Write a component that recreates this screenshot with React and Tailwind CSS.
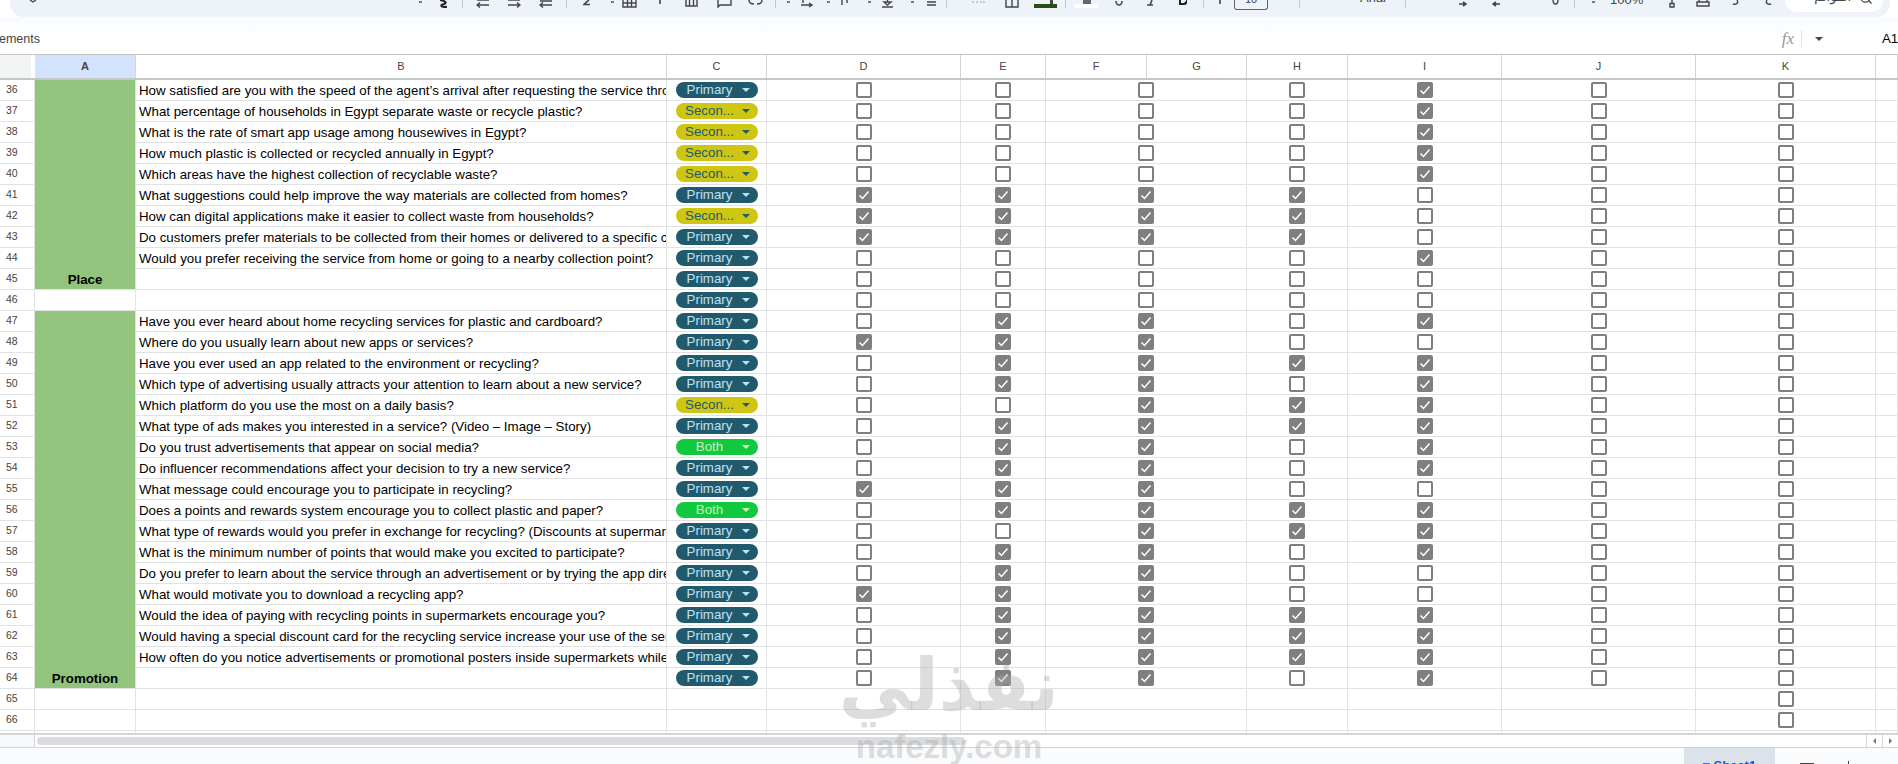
import React from 'react'
import { Search } from 'lucide-react'

const font = "font-['Liberation_Sans',Arial,sans-serif]"
const gridCols = 'grid grid-cols-[35px_101px_531px_100px_194px_85px_201px_101px_154px_194px_180px_22px]'
const line = 'border-r border-b border-[#e1e3e3]'

const rows = [
  [36, 'How satisfied are you with the speed of the agent’s arrival after requesting the service through', 'P', 'I'],
  [37, 'What percentage of households in Egypt separate waste or recycle plastic?', 'S', 'I'],
  [38, 'What is the rate of smart app usage among housewives in Egypt?', 'S', 'I'],
  [39, 'How much plastic is collected or recycled annually in Egypt?', 'S', 'I'],
  [40, 'Which areas have the highest collection of recyclable waste?', 'S', 'I'],
  [41, 'What suggestions could help improve the way materials are collected from homes?', 'P', 'DEFH'],
  [42, 'How can digital applications make it easier to collect waste from households?', 'S', 'DEFH'],
  [43, 'Do customers prefer materials to be collected from their homes or delivered to a specific collection', 'P', 'DEFH'],
  [44, 'Would you prefer receiving the service from home or going to a nearby collection point?', 'P', 'I'],
  [45, '', 'P', ''],
  [46, '', 'P', ''],
  [47, 'Have you ever heard about home recycling services for plastic and cardboard?', 'P', 'EFI'],
  [48, 'Where do you usually learn about new apps or services?', 'P', 'DEF'],
  [49, 'Have you ever used an app related to the environment or recycling?', 'P', 'EFHI'],
  [50, 'Which type of advertising usually attracts your attention to learn about a new service?', 'P', 'EFI'],
  [51, 'Which platform do you use the most on a daily basis?', 'S', 'FHI'],
  [52, 'What type of ads makes you interested in a service? (Video – Image – Story)', 'P', 'EFHI'],
  [53, 'Do you trust advertisements that appear on social media?', 'B', 'EFI'],
  [54, 'Do influencer recommendations affect your decision to try a new service?', 'P', 'EFI'],
  [55, 'What message could encourage you to participate in recycling?', 'P', 'DEF'],
  [56, 'Does a points and rewards system encourage you to collect plastic and paper?', 'B', 'EFHI'],
  [57, 'What type of rewards would you prefer in exchange for recycling? (Discounts at supermarkets', 'P', 'FHI'],
  [58, 'What is the minimum number of points that would make you excited to participate?', 'P', 'EFI'],
  [59, 'Do you prefer to learn about the service through an advertisement or by trying the app directly', 'P', 'EF'],
  [60, 'What would motivate you to download a recycling app?', 'P', 'DEF'],
  [61, 'Would the idea of paying with recycling points in supermarkets encourage you?', 'P', 'EFHI'],
  [62, 'Would having a special discount card for the recycling service increase your use of the service', 'P', 'EFHI'],
  [63, 'How often do you notice advertisements or promotional posters inside supermarkets while shopping', 'P', 'EFHI'],
  [64, '', 'P', 'EFI'],
  [65, '', '', ''],
  [66, '', '', ''],
]

const pills = {
  P: { label: 'Primary', box: 'bg-[#215a6c] text-[#bfe1f6]', caret: 'border-t-[#bfe1f6]' },
  S: { label: 'Secon...', box: 'bg-[#cfc613] text-[#215a6c]', caret: 'border-t-[#215a6c]' },
  B: { label: 'Both', box: 'bg-[#11c93f] text-[#d4edbc]', caret: 'border-t-[#d4edbc]' },
}

const Pill = ({ kind }) => {
  const p = pills[kind]
  return (
    <div className={`w-[82px] h-4 rounded-full flex items-center pl-[8px] pr-[8px] text-[13.3px] leading-4 ${p.box}`}>
      <span className="w-[52px] text-center whitespace-nowrap">{p.label}</span>
      <span className={`ml-auto w-0 h-0 border-x-[4px] border-x-transparent border-t-[4px] ${p.caret}`}></span>
    </div>
  )
}

const Check = ({ on }) => (
  <div className={`w-4 h-4 rounded-[2px] border-2 border-[#7f7f7f] flex items-center justify-center ${on ? 'bg-[#7f7f7f]' : 'bg-white'}`}>
    {on && (
      <svg width="12" height="12" viewBox="0 0 12 12" fill="none" stroke="#fff" strokeWidth="1.5">
        <path d="M1.5 6.5 4.5 9.5 10.5 2.5" />
      </svg>
    )}
  </div>
)

const BoxCell = ({ col, row, show = true }) => (
  <div className={`${line} flex items-center justify-center`}>
    {show && <Check on={row[3].includes(col)} />}
  </div>
)

const Ico = ({ w, d, className = '', color = '#444746', sw = 1.4 }) => (
  <svg width={w} height="8" viewBox={`0 0 ${w} 8`} fill="none" stroke={color} strokeWidth={sw} className={`shrink-0 ${className}`}>
    <path d={d} />
  </svg>
)

const Sep = ({ className }) => <div className={`w-px h-2 shrink-0 bg-[#c7c7c7] ${className}`}></div>
const Dot = ({ className }) => <div className={`w-[3px] h-[2px] mt-[1px] shrink-0 bg-[#777] ${className}`}></div>

const Toolbar = () => (
  <div className="ml-[10px] mr-[8px] h-[17px] bg-[#eef2f9] rounded-bl-[14px] rounded-br-[14px] flex items-start overflow-hidden">
    <Ico w={10} d="M2 0 5 2 8 0" className="ml-[18px]" />
    <Dot className="ml-[381px]" />
    <Ico w={13} d="M3 0C9 1 10 3 7 4 3 5 3 7 10 7" className="ml-[15px]" color="#222" sw={2} />
    <Sep className="ml-[12px]" />
    <Ico w={14} d="M1 0H13M1 5H13M4 2.5 1 5 4 7.5" className="ml-[13px]" />
    <Ico w={14} d="M1 0H13M1 5H13M10 2.5 13 5 10 7.5" className="ml-[17px]" />
    <Ico w={14} d="M1 1H13M1 5H13M4 2.5 1 5 4 7.5" className="ml-[18px]" />
    <Sep className="ml-[13px]" />
    <Ico w={8} d="M6 0 1 4.5H7" className="ml-[16px]" sw={1.6} />
    <Dot className="ml-[20px]" />
    <Ico w={15} d="M1 0V7H14V0M1 3H14M5.5 0V7M9.5 0V7" className="ml-[8px]" />
    <Ico w={4} d="M2 0V4" className="ml-[21px]" sw={1.6} />
    <Ico w={13} d="M1 0V6H12V0M4.5 0V6M8.5 0V6" className="ml-[23px]" />
    <Ico w={15} d="M1 0V7L3 5H14V0" className="ml-[19px]" />
    <Ico w={15} d="M1 0C1 3 3 4 6 4M14 0C14 3 12 4 9 4" className="ml-[16px]" />
    <Sep className="ml-[12px]" />
    <Dot className="ml-[11px]" />
    <Ico w={13} d="M3 0V3M1 5H12M9 3 12 5 9 7" className="ml-[10px]" />
    <Dot className="ml-[14px]" />
    <Ico w={10} d="M2 0V5M7 0V3" className="ml-[10px]" />
    <Dot className="ml-[18px]" />
    <Ico w={11} d="M5.5 0V2M2 2H9L5.5 5ZM0 7H11" className="ml-[11px]" />
    <Dot className="ml-[18px]" />
    <Ico w={9} d="M0 2H9M0 5H9" className="ml-[13px]" />
    <Sep className="ml-[10px]" />
    <Ico w={13} d="M1 1V3M5 1V3M9 1V3M12 1V3" className="ml-[25px]" color="#b5b8bd" />
    <Ico w={14} d="M1 0V7H13V0M7 0V7" className="ml-[20px]" />
    <div className="w-[23px] h-2 ml-[15px] shrink-0 flex flex-col items-end">
      <div className="w-[3px] h-[4px] bg-[#444746] mr-[4px]"></div>
      <div className="w-full h-[4px] bg-[#274e13]"></div>
    </div>
    <Sep className="ml-[8px]" />
    <div className="w-[23px] h-2 ml-[9px] shrink-0 flex flex-col items-center">
      <div className="w-[8px] h-[4px] bg-[#666]"></div>
      <div className="w-full h-[4px] bg-white"></div>
    </div>
    <Ico w={8} d="M1 1C1 4 3 5 4 5S7 4 7 1" className="ml-[17px]" sw={1.6} />
    <Ico w={6} d="M5 0 3 5H0M3 5H6" className="ml-[24px]" sw={1.6} />
    <Ico w={8} d="M1 0V4H5C8 4 8 0 7 0" className="ml-[26px]" color="#222" sw={2} />
    <Sep className="ml-[16px]" />
    <Ico w={2} d="M1 0V4" className="ml-[15px]" sw={1.6} />
    <div className={`w-[34px] h-[10px] ml-[13px] shrink-0 border border-t-0 border-[#5f6368] rounded-b-[3px] text-[11px] leading-none text-center text-[#444] overflow-hidden ${font}`}>
      <div className="-mt-[6px]">10</div>
    </div>
    <Sep className="ml-[31px]" />
    <div className={`w-[30px] ml-[60px] shrink-0 -mt-[10px] text-[13px] leading-4 text-[#444] ${font}`}>Arial</div>
    <Sep className="ml-[15px]" />
    <div className={`w-[17px] ml-[12px] shrink-0 -mt-[9px] text-[10px] leading-3 text-[#444] ${font}`}>123</div>
    <Ico w={8} d="M0 4H6M4 2 7 4 4 6" className="ml-[24px]" sw={1.6} />
    <Ico w={8} d="M8 4H2M4 2 1 4 4 6" className="ml-[25px]" sw={1.6} />
    <div className={`w-[10px] ml-[18px] shrink-0 -mt-[9px] text-[10px] leading-3 text-[#444] ${font}`}>%</div>
    <Ico w={7} d="M1 0C1 3 2 4 3.5 4S6 3 6 0" className="ml-[24px]" />
    <Sep className="ml-[15px]" />
    <Dot className="ml-[17px]" />
    <div className={`w-[35px] ml-[15px] shrink-0 -mt-[8px] text-[13px] leading-4 whitespace-nowrap text-[#444] ${font}`}>100%</div>
    <svg width="6" height="8" viewBox="0 0 6 8" fill="none" stroke="#444746" strokeWidth="1.4" className="ml-[24px] shrink-0"><path d="M3 0V3M1 3.5H5V7H1Z" /></svg>
    <Ico w={14} d="M3 0V2M11 0V2M1 2H13V6H1ZM3 6H11" className="ml-[21px]" />
    <Ico w={8} d="M6 0C8 3 5 5 2 4" className="ml-[21px]" />
    <Ico w={8} d="M2 0C0 3 3 5 6 4" className="ml-[26px]" />
    <div className="w-[98px] h-3 ml-[12px] shrink-0 bg-white rounded-b-[12px] flex items-start overflow-hidden">
      <div dir="rtl" className="ml-[24px] -mt-[11px] w-[42px] text-[13px] leading-4 text-[#444] whitespace-nowrap font-['DejaVu_Sans',sans-serif]">القوائم</div>
      <Search size={14} className="ml-[8px] -mt-[9px] text-[#444]" />
    </div>
  </div>
)

const FormulaBar = () => (
  <div className={`h-[37px] bg-gradient-to-b from-[#f8fafd] via-white to-white flex items-center text-[12.5px] text-[#444] ${font}`}>
    <span className="-ml-[1px] mt-[8px]">ements</span>
    <div className="ml-auto mt-[6px] flex items-center">
      <span className="text-[17px] italic text-[#999] font-['Liberation_Serif',serif]">fx</span>
      <div className="w-px h-[18px] ml-[7px] bg-[#e1e3e3]"></div>
      <div className="ml-[13px] w-0 h-0 border-x-[4px] border-x-transparent border-t-[4px] border-t-[#444]"></div>
      <span className="ml-[59px] w-[16px] text-[13.3px] text-black whitespace-nowrap">A1</span>
    </div>
  </div>
)

const HeadCell = ({ label, className = '' }) => (
  <div className={`border-r border-[#d3d5d6] flex items-center justify-center text-[11px] text-[#444] ${className}`}>{label}</div>
)

const ColumnHeader = () => (
  <div className={`h-[26px] border-t border-b-2 border-t-[#c4c7c5] border-b-[#c4c7c5] grid grid-cols-[35px_101px_531px_100px_194px_85px_101px_100px_101px_154px_194px_180px_22px] ${font}`}>
    <div className="pr-[4px]"><div className="h-full bg-[#f3f4f5]"></div></div>
    <HeadCell label="A" className="bg-[#d3e3fd] font-bold text-[#041e49]" />
    {['B', 'C', 'D', 'E', 'F', 'G', 'H', 'I', 'J', 'K', ''].map((c, i) => (
      <HeadCell key={i} label={c} />
    ))}
  </div>
)

const Sheet = () => (
  <div className={`${gridCols} auto-rows-[21px] ${font}`}>
    {rows.map((row) => {
      const n = row[0]
      return (
        <React.Fragment key={n}>
          <div className={`${line} flex items-center pl-[6px] text-[10.5px] text-[#444]`}>{n}</div>
          {n === 36 && <GreenCell span="row-span-10" label="Place" />}
          {n === 46 && <div className={line}></div>}
          {n === 47 && <GreenCell span="row-span-18" label="Promotion" />}
          {n > 64 && <div className={line}></div>}
          <div className={`${line} overflow-hidden whitespace-nowrap pl-[3px] text-[13.3px] leading-[21px] text-black`}>{row[1]}</div>
          <div className={`${line} flex items-center justify-center`}>{row[2] && <Pill kind={row[2]} />}</div>
          <BoxCell col="D" row={row} show={n < 65} />
          <BoxCell col="E" row={row} show={n < 65} />
          <BoxCell col="F" row={row} show={n < 65} />
          <BoxCell col="H" row={row} show={n < 65} />
          <BoxCell col="I" row={row} show={n < 65} />
          <BoxCell col="J" row={row} show={n < 65} />
          <BoxCell col="K" row={row} />
          <div className={line}></div>
        </React.Fragment>
      )
    })}
  </div>
)

const GreenCell = ({ span, label }) => (
  <div className={`${span} bg-[#93c47d] border-r border-b border-[#e1e3e3] flex items-end justify-center text-[13.3px] leading-[19px] font-bold text-black`}>
    {label}
  </div>
)

const ScrollBar = () => (
  <div className="h-[15px] border-t-2 border-b border-[#d3d5d6] flex items-center bg-white">
    <div className="w-[35px] h-full bg-[#f8f9fa] border-r border-[#d3d5d6]"></div>
    <div className="w-[928px] h-2 ml-[2px] rounded-full bg-[#dadce0]"></div>
    <div className="ml-auto w-[32px] h-full flex items-center">
      <div className="w-4 h-full border-l border-[#d3d5d6] flex items-center justify-center">
        <div className="w-0 h-0 border-y-[3px] border-y-transparent border-r-[3px] border-r-[#777]"></div>
      </div>
      <div className="w-4 h-full border-l border-[#d3d5d6] flex items-center justify-center">
        <div className="w-0 h-0 border-y-[3px] border-y-transparent border-l-[3px] border-l-[#777]"></div>
      </div>
    </div>
  </div>
)

const Footer = () => (
  <div className={`h-[19px] bg-[#f9fbfd] flex items-start overflow-hidden ${font}`}>
    <Ico w={6} d="M1 6 4 9" className="ml-[12px] mt-[12px]" />
    <div className="w-[91px] h-full ml-[1666px] bg-[#dbe2ea] text-[13px] font-bold text-[#0b57d0] flex justify-center pt-[8px] whitespace-nowrap">
      ▾ Sheet1
    </div>
    <div className="w-[14px] h-[2px] ml-[25px] mt-[15px] bg-[#444]"></div>
    <div className="w-px h-[6px] ml-[34px] mt-[13px] bg-[#444]"></div>
  </div>
)

// nafezly stamp sits over the sheet
const Watermark = () => (
  <div className="absolute left-[838px] top-[640px] w-[222px] flex flex-col items-center pointer-events-none text-[#a9a9a9]/40">
    <div dir="rtl" className="text-[72px] leading-[90px] font-bold whitespace-nowrap font-['DejaVu_Sans',sans-serif]">نفذلي</div>
    <div className={`-mt-[1px] text-[33px] leading-9 font-bold whitespace-nowrap ${font}`}>nafezly.com</div>
  </div>
)

export default function App() {
  return (
    <div className="relative w-[1898px] h-[764px] overflow-hidden bg-white">
      <Toolbar />
      <FormulaBar />
      <ColumnHeader />
      <Sheet />
      <div className={`${gridCols} h-[2px]`}>
        {Array.from({ length: 12 }).map((_, i) => (
          <div key={i} className="border-r border-[#e1e3e3]"></div>
        ))}
      </div>
      <ScrollBar />
      <Footer />
      <Watermark />
    </div>
  )
}
